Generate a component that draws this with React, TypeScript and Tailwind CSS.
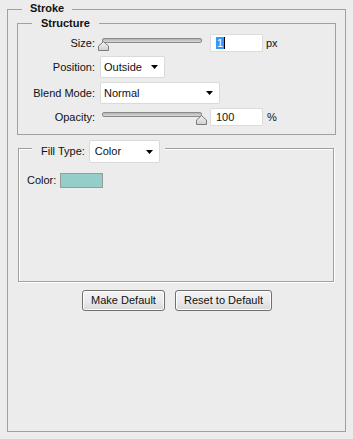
import React from "react";

const BG = "bg-[#ececec]";

function Slider({ thumb }: { thumb: number }) {
  return (
    <div className="relative w-[110px] h-[18px] shrink-0">
      <div className="absolute left-[4px] top-[4px] w-[100px] h-[5px] rounded-[2px] border border-[#8a8a8a] bg-gradient-to-b from-[#b4b4b4] to-[#d8d8d8]" />
      <svg
        className="absolute top-[7px]"
        style={{ left: thumb }}
        width="11"
        height="10"
        viewBox="0 0 11 10"
      >
        <defs>
          <linearGradient id="tg" x1="0" y1="0" x2="0" y2="1">
            <stop offset="0" stopColor="#f4f4f4" />
            <stop offset="1" stopColor="#cfcfcf" />
          </linearGradient>
        </defs>
        <path
          d="M0.5 9.5 V5 L5.5 0.7 L10.5 5 V9.5 Z"
          fill="url(#tg)"
          stroke="#7c7c7c"
          strokeWidth="1"
          strokeLinejoin="round"
        />
      </svg>
    </div>
  );
}

function Arrow() {
  return (
    <svg width="7" height="4" viewBox="0 0 7 4" className="shrink-0">
      <path d="M0 0 H7 L3.5 4 Z" fill="#000" />
    </svg>
  );
}

function Select({ label, w, h = 22, pl = 3 }: { label: string; w: number; h?: number; pl?: number }) {
  return (
    <div
      className="flex items-center justify-between bg-white border border-[#dadada] rounded-[2px] pr-[6px] shrink-0"
      style={{ width: w, height: h, paddingLeft: pl }}
    >
      <span>{label}</span>
      <Arrow />
    </div>
  );
}

function Input({ children }: { children: React.ReactNode }) {
  return (
    <div className="flex items-center w-[53px] h-[18px] bg-white border border-[#dcdcdc] rounded-[2px] pl-[5px] shrink-0">
      {children}
    </div>
  );
}

function Label({ children }: { children: React.ReactNode }) {
  return <div className="w-[77px] text-right shrink-0">{children}</div>;
}

function Button({ children, w }: { children: React.ReactNode; w: number }) {
  return (
    <div
      className="h-[21px] flex items-center justify-center border border-[#707070] rounded-[3px] bg-gradient-to-b from-[#f3f3f3] via-[#ebebeb] to-[#d9d9d9] shadow-[inset_0_0_0_1px_#fcfcfc]"
      style={{ width: w }}
    >
      {children}
    </div>
  );
}

export default function App() {
  return (
    <div
      className={`w-[353px] h-[439px] ${BG} text-[11px] leading-[13px] text-[#111] overflow-hidden pt-[9px] pl-[7px]`}
      style={{ fontFamily: '"Liberation Sans", Arial, sans-serif' }}
    >
      <div className="w-[339px] h-[423px] border border-[#a0a0a0] flex flex-col">
        <div className={`-mt-[8px] ml-[14px] px-[8px] w-fit ${BG} font-bold`}>Stroke</div>

        {/* Structure */}
        <div className="ml-[9px] mt-[8px] w-[319px] border border-[#a0a0a0] flex flex-col pb-[8px]">
          <div className={`-mt-[7px] ml-[14px] px-[9px] w-fit ${BG} font-bold`}>Structure</div>
          <div className="mt-[4px] flex flex-col gap-[4px]">
            <div className="flex items-center h-[18px]">
              <Label>Size:</Label>
              <div className="ml-[3px]">
                <Slider thumb={0} />
              </div>
              <div className="ml-[2px]">
                <Input>
                  <span className="bg-[#3399ff] text-white px-[1px] leading-[12px]">1</span>
                  <span className="w-[1px] h-[12px] bg-black" />
                </Input>
              </div>
              <span className="ml-[3px]">px</span>
            </div>
            <div className="flex items-center h-[22px]">
              <Label>Position:</Label>
              <div className="ml-[5px]">
                <Select label="Outside" w={65} />
              </div>
            </div>
            <div className="flex items-center h-[22px]">
              <Label>Blend Mode:</Label>
              <div className="ml-[5px]">
                <Select label="Normal" w={120} />
              </div>
            </div>
            <div className="flex items-center h-[18px]">
              <Label>Opacity:</Label>
              <div className="ml-[3px]">
                <Slider thumb={98} />
              </div>
              <div className="ml-[2px]">
                <Input>100</Input>
              </div>
              <span className="ml-[4px]">%</span>
            </div>
          </div>
        </div>

        {/* Fill */}
        <div className="ml-[10px] mt-[13px] w-[316px] h-[134px] border border-[#a0a0a0] shadow-[inset_1px_1px_0_#ffffff,1px_1px_0_#ffffff] flex flex-col">
          <div className={`-mt-[9px] ml-[13px] pl-[9px] pr-[5px] w-fit ${BG} flex items-center`}>
            <span>Fill Type:</span>
            <div className="ml-[4px]">
              <Select label="Color" w={71} h={23} pl={5} />
            </div>
          </div>
          <div className="mt-[10px] ml-[8px] flex items-center">
            <span>Color:</span>
            <div className="ml-[4px] w-[43px] h-[15px] bg-[#93cfc8] border border-[#9a9a9a]" />
          </div>
        </div>

        <div className="mt-[8px] flex justify-center gap-[10px] pl-[1px]">
          <Button w={83}>Make Default</Button>
          <Button w={97}>Reset to Default</Button>
        </div>
      </div>
    </div>
  );
}
